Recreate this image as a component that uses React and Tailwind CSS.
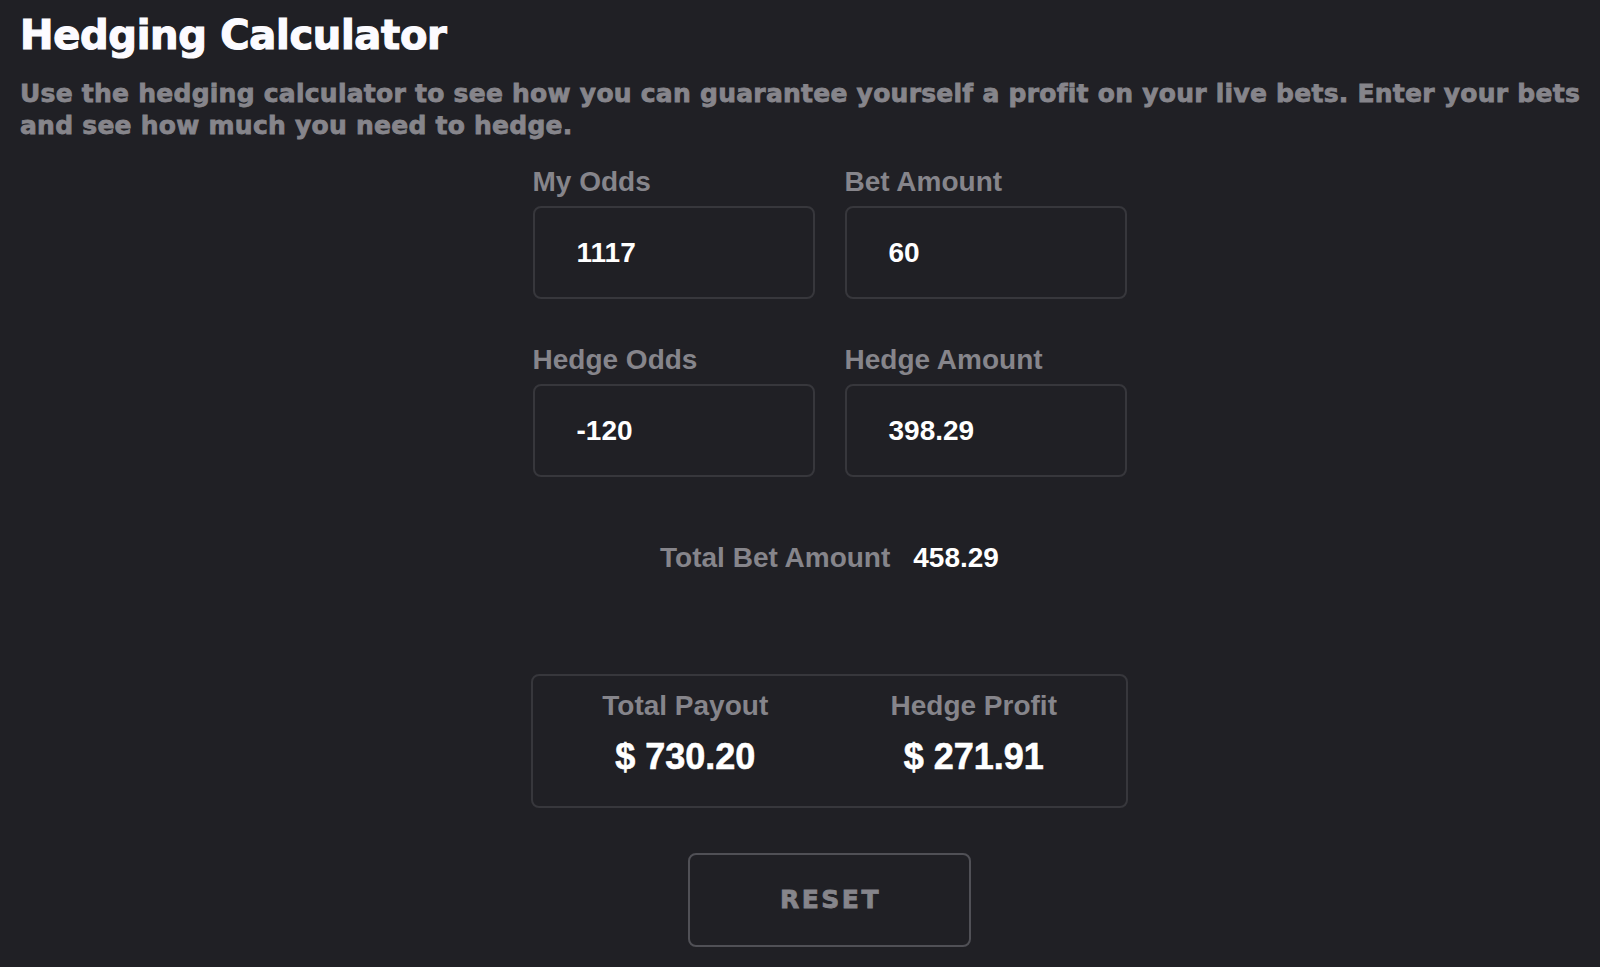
import React from 'react';

const fields = [
  { label: 'My Odds', value: '1117' },
  { label: 'Bet Amount', value: '60' },
  { label: 'Hedge Odds', value: '-120' },
  { label: 'Hedge Amount', value: '398.29' },
];

const Field = ({ label, value }) => (
  <div className="flex flex-col">
    <span className="text-[28px] leading-[32px] font-bold text-[#86858b] mb-2">{label}</span>
    <div className="h-[93px] border-2 border-[#37373c] rounded-lg flex items-center pl-[42px] text-[28px] font-bold text-white">
      {value}
    </div>
  </div>
);

const App = () => {
  return (
    <div
      className="min-h-screen bg-[#202025] px-5 pt-[11px] pb-10"
      style={{ fontFamily: '"Liberation Sans", Arial, sans-serif' }}
    >
      {/* Header */}
      <h1 className="font-['DejaVu_Sans',sans-serif] text-[40px] leading-[48px] font-bold text-[#fcfbff] tracking-[-0.3px] [-webkit-text-stroke:1.2px_#fcfbff]">
        Hedging Calculator
      </h1>
      <p className="font-['DejaVu_Sans',sans-serif] text-[25px] leading-[32px] font-bold text-[#86858b] mt-[19px] tracking-[0.25px] [-webkit-text-stroke:0.8px_#86858b]">
        <span className="whitespace-nowrap">
          Use the hedging calculator to see how you can guarantee yourself a profit on your live bets. Enter your bets
        </span>
        <br />
        and see how much you need to hedge.
      </p>

      {/* Calculator */}
      <div className="flex flex-col items-center pl-[59px] mt-[24px]">
        <div className="w-[594px] grid grid-cols-2 gap-x-[30px] gap-y-[45px]">
          {fields.map((f) => (
            <Field key={f.label} label={f.label} value={f.value} />
          ))}
        </div>

        <div className="mt-[65px] flex items-center gap-[23px] text-[28px] leading-[32px] font-bold">
          <span className="text-[#86858b]">Total Bet Amount</span>
          <span className="text-white">458.29</span>
        </div>

        <div className="mt-[100px] w-[597px] h-[134px] border-2 border-[#37373c] rounded-lg grid grid-cols-2 px-2 pt-[14px]">
          <div className="flex flex-col items-center">
            <span className="text-[28px] leading-[32px] font-bold text-[#86858b]">Total Payout</span>
            <span className="mt-[15px] text-[36px] leading-[40px] font-bold text-white [-webkit-text-stroke:0.6px_#ffffff]">$ 730.20</span>
          </div>
          <div className="flex flex-col items-center">
            <span className="text-[28px] leading-[32px] font-bold text-[#86858b]">Hedge Profit</span>
            <span className="mt-[15px] text-[36px] leading-[40px] font-bold text-white [-webkit-text-stroke:0.6px_#ffffff]">$ 271.91</span>
          </div>
        </div>

        <button className="mt-[45px] w-[283px] h-[94px] border-2 border-[#505056] rounded-lg flex items-center justify-center font-['DejaVu_Sans',sans-serif] text-[25px] font-bold tracking-[2.5px] text-[#86858b] pl-[2px] [-webkit-text-stroke:0.8px_#86858b]">
          RESET
        </button>
      </div>
    </div>
  );
};

export default App;
